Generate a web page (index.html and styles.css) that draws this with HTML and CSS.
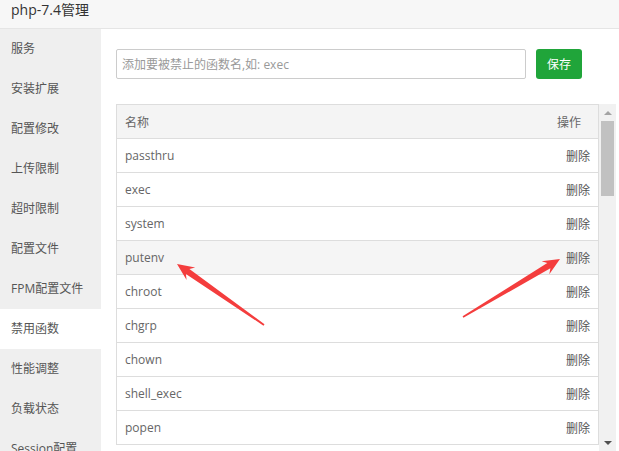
FILE: index.html
```html
<!DOCTYPE html>
<html lang="zh-CN">
<head>
<meta charset="utf-8">
<title>php-7.4管理</title>
<link rel="stylesheet" href="styles.css">
</head>
<body>
<div class="page">
  <div class="header">php-7.4管理</div>
  <div class="main">
    <ul class="sidebar">
      <li class="nav-item">服务</li>
      <li class="nav-item">安装扩展</li>
      <li class="nav-item">配置修改</li>
      <li class="nav-item">上传限制</li>
      <li class="nav-item">超时限制</li>
      <li class="nav-item">配置文件</li>
      <li class="nav-item">FPM配置文件</li>
      <li class="nav-item active">禁用函数</li>
      <li class="nav-item">性能调整</li>
      <li class="nav-item">负载状态</li>
      <li class="nav-item">Session配置</li>
    </ul>
    <div class="content">
      <div class="form-row">
        <input class="func-input" type="text" placeholder="添加要被禁止的函数名,如: exec">
        <button class="btn-save" type="button">保存</button>
      </div>
      <div class="table-wrap">
        <div class="table-box">
          <table class="func-table">
            <thead>
              <tr><th class="col-name">名称</th><th class="col-op">操作</th></tr>
            </thead>
            <tbody>
              <tr><td>passthru</td><td class="op">删除</td></tr>
              <tr><td>exec</td><td class="op">删除</td></tr>
              <tr><td>system</td><td class="op">删除</td></tr>
              <tr class="hover"><td>putenv</td><td class="op">删除</td></tr>
              <tr><td>chroot</td><td class="op">删除</td></tr>
              <tr><td>chgrp</td><td class="op">删除</td></tr>
              <tr><td>chown</td><td class="op">删除</td></tr>
              <tr><td>shell_exec</td><td class="op">删除</td></tr>
              <tr><td>popen</td><td class="op">删除</td></tr>
            </tbody>
          </table>
        </div>
        <div class="scrollbar">
          <div class="sb-btn"><span class="tri-up"></span></div>
          <div class="sb-track"><div class="sb-thumb"></div></div>
          <div class="sb-btn"><span class="tri-down"></span></div>
        </div>
      </div>
    </div>
  </div>
  <svg class="annotations" width="619" height="451" viewBox="0 0 619 451">
    <polygon points="177,264 195.2,267.6 189.4,269.0 264.5,324.3 263.5,325.7 185.9,273.9 186.6,279.9" fill="#f43d3d"/>
    <polygon points="560,259 549.3,274.2 550.4,268.3 463.4,317.7 462.6,316.3 547.3,263.1 541.6,261.3" fill="#f43d3d"/>
  </svg>
</div>
</body>
</html>
```

FILE: styles.css
```css
* { box-sizing: border-box; }
html, body { margin: 0; padding: 0; }
body {
  font-family: "Open Sans", "Noto Sans CJK SC", sans-serif;
  font-size: 12px;
  color: #555;
  background: #fff;
}
.page {
  position: relative;
  width: 619px;
  height: 451px;
  overflow: hidden;
  display: flex;
  flex-direction: column;
}
.header {
  height: 29px;
  flex: none;
  background: #f7f7f7;
  border-bottom: 1px solid #e5e5e5;
  padding: 0 11px;
  font-size: 14px;
  line-height: 20px;
  color: #333;
}
.main {
  flex: 1;
  display: flex;
  min-height: 0;
}
.sidebar {
  list-style: none;
  margin: 0;
  padding: 0;
  width: 101px;
  flex: none;
  background: #efefef;
}
.nav-item {
  height: 40px;
  line-height: 40px;
  padding-left: 11px;
  color: #555;
  white-space: nowrap;
}
.nav-item.active { background: #fff; }
.content {
  flex: 1;
  padding: 20px 3px 0 15px;
  display: flex;
  flex-direction: column;
}
.form-row {
  display: flex;
  align-items: flex-start;
  gap: 10px;
}
.func-input {
  width: 410px;
  height: 30px;
  border: 1px solid #ccc;
  border-radius: 2px;
  padding: 0 5px;
  font-family: inherit;
  font-size: 12px;
  color: #555;
  outline: none;
}
.func-input::placeholder { color: #999; }
.btn-save {
  width: 46px;
  height: 30px;
  border: none;
  border-radius: 3px;
  background: #20a53a;
  color: #fff;
  font-family: inherit;
  font-size: 12px;
  padding: 0;
}
.table-wrap {
  margin-top: 25px;
  display: flex;
  height: 350px;
}
.table-box {
  width: 483px;
  overflow: hidden;
}
.func-table {
  width: 100%;
  border-collapse: collapse;
  border: 1px solid #ddd;
  border-bottom: none;
}
.func-table th, .func-table td {
  height: 34px;
  padding: 0 8px;
  font-weight: normal;
  color: #666;
  border-bottom: 1px solid #ddd;
  text-align: left;
  white-space: nowrap;
}
.func-table thead th {
  background: #f4f4f4;
}
.func-table th.col-op {
  text-align: right;
  padding-right: 17px;
}
.func-table td.op {
  text-align: right;
  color: #555;
}
.func-table tr.hover td { background: #f5f5f5; }
.scrollbar {
  width: 17px;
  flex: none;
  background: #f1f1f1;
  display: flex;
  flex-direction: column;
}
.sb-btn {
  height: 17px;
  flex: none;
  display: flex;
  align-items: center;
  justify-content: center;
}
.tri-up {
  width: 0; height: 0;
  border-left: 4px solid transparent;
  border-right: 4px solid transparent;
  border-bottom: 4px solid #a3a3a3;
}
.tri-down {
  width: 0; height: 0;
  border-left: 4px solid transparent;
  border-right: 4px solid transparent;
  border-top: 4px solid #505050;
}
.sb-track {
  flex: 1;
  padding: 0 2px;
}
.sb-thumb {
  height: 75px;
  background: #c1c1c1;
}
.annotations {
  position: absolute;
  left: 0;
  top: 0;
  pointer-events: none;
}
```
